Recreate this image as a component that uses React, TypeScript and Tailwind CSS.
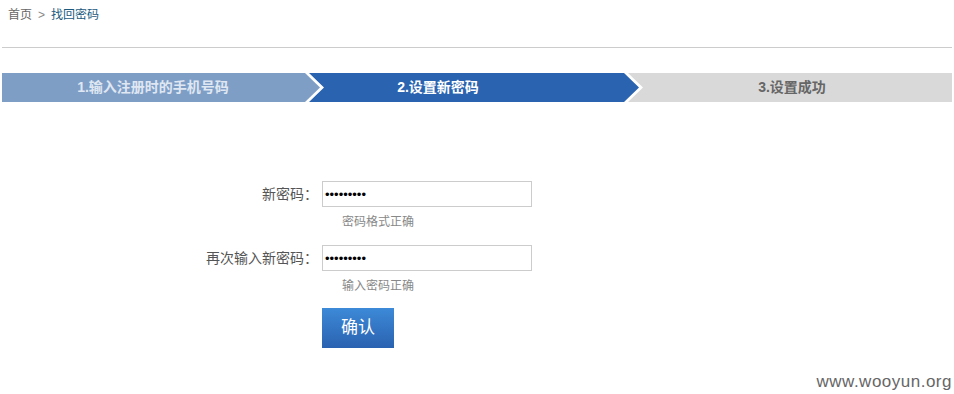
import React from 'react';

const font = { fontFamily: '"Liberation Sans", "Noto Sans CJK SC", sans-serif' };

const steps = [
    {
        label: '1.输入注册时的手机号码',
        className:
            'w-[318px] pr-[16px] bg-[#7f9ec6] text-[#dfe7f2] [clip-path:polygon(0_0,calc(100%_-_15px)_0,100%_50%,calc(100%_-_15px)_100%,0_100%)]',
    },
    {
        label: '2.设置新密码',
        className:
            '-ml-[11px] w-[330px] pr-[72px] bg-[#2a63b0] text-white [clip-path:polygon(0_0,calc(100%_-_15px)_0,100%_50%,calc(100%_-_15px)_100%,0_100%,15px_50%)]',
    },
    {
        label: '3.设置成功',
        className:
            '-ml-[11px] flex-1 pl-[4px] bg-[#d9d9d9] text-[#666666] [clip-path:polygon(0_0,100%_0,100%_100%,0_100%,15px_50%)]',
    },
];

const Field = ({ label, hint }: { label: string; hint: string }) => (
    <div className="flex flex-col">
        <div className="flex items-center">
            <div className="w-[318px] text-right text-[14px] text-[#555555]">
                {label}
            </div>
            <input
                type="password"
                defaultValue="123456789"
                className="ml-[4px] h-[26px] w-[210px] border border-[#cccccc] px-[2px] text-[13px] text-black outline-none"
            />
        </div>
        <div className="mt-[8px] pl-[342px] text-[12px] leading-[14px] text-[#888888]">
            {hint}
        </div>
    </div>
);

const App = () => {
    return (
        <div className="relative h-[394px] w-[954px] bg-white" style={font}>
            <div className="flex items-center gap-[6px] pl-[8px] pt-[8px] text-[12px] leading-[14px]">
                <span className="text-[#666666]">首页</span>
                <span className="text-[#888888]">&gt;</span>
                <span className="text-[#1c5a7e]">找回密码</span>
            </div>
            <div className="mx-[2px] mt-[25px] border-t border-[#cccccc]" />

            <div className="mx-[2px] mt-[25px] flex h-[29px]">
                {steps.map((s) => (
                    <div
                        key={s.label}
                        className={`flex items-center justify-center text-[14px] font-bold ${s.className}`}
                    >
                        {s.label}
                    </div>
                ))}
            </div>

            <div className="mt-[79px] flex flex-col gap-[16px]">
                <Field label="新密码：" hint="密码格式正确" />
                <Field label="再次输入新密码：" hint="输入密码正确" />
            </div>

            <div className="mt-[15px] pl-[322px]">
                <button className="h-[40px] w-[72px] bg-gradient-to-b from-[#3d8ad8] to-[#2a62b0] text-[17px] text-white">
                    确认
                </button>
            </div>

            <div className="absolute bottom-[0px] right-[2px] text-[17px] tracking-[0.5px] text-[#666666]">
                www.wooyun.org
            </div>
        </div>
    );
};

export default App;
